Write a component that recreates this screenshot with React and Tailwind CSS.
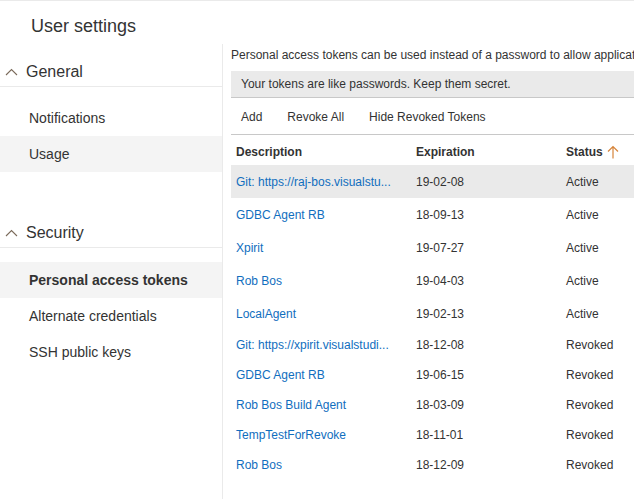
import React from "react";

const tokens = [
    { name: "Git: https://raj-bos.visualstu...", exp: "19-02-08", status: "Active", selected: true },
    { name: "GDBC Agent RB", exp: "18-09-13", status: "Active" },
    { name: "Xpirit", exp: "19-07-27", status: "Active" },
    { name: "Rob Bos", exp: "19-04-03", status: "Active" },
    { name: "LocalAgent", exp: "19-02-13", status: "Active" },
    { name: "Git: https://xpirit.visualstudi...", exp: "18-12-08", status: "Revoked" },
    { name: "GDBC Agent RB", exp: "19-06-15", status: "Revoked" },
    { name: "Rob Bos Build Agent", exp: "18-03-09", status: "Revoked" },
    { name: "TempTestForRevoke", exp: "18-11-01", status: "Revoked" },
    { name: "Rob Bos", exp: "18-12-09", status: "Revoked" },
];

const Chevron = () => (
    <svg width="13" height="8" viewBox="0 0 13 8" className="mr-[8px]">
        <polyline points="1,7 6.5,1.5 12,7" fill="none" stroke="#7a6a5a" strokeWidth="1.1" />
    </svg>
);

const GroupHeader = ({ title }) => (
    <div className="h-[43px] pt-[14px] flex items-center pl-[5px] border-b border-[#eaeaea] text-[16px] text-[#333]">
        <Chevron />
        <span>{title}</span>
    </div>
);

const NavItem = ({ label, active, hovered }) => (
    <div
        className={
            "h-[36px] flex items-center pl-[29px] text-[14px] text-[#333] " +
            (active ? "bg-[#f4f4f4] font-semibold " : "") +
            (hovered ? "bg-[#f4f4f4]" : "")
        }
    >
        {label}
    </div>
);

const App = () => {
    return (
        <div className="w-[634px] h-[499px] overflow-hidden bg-white border-t border-[#eaeaea] font-['Liberation_Sans','Noto_Sans',sans-serif]">
            <div className="h-[43px] pl-[31px] pt-[13px]">
                <h1 className="text-[18px] leading-[24px] text-[#333]">User settings</h1>
            </div>
            <div className="flex h-[455px]">
                <div className="w-[223px] shrink-0 border-r border-[#eaeaea]">
                    <GroupHeader title="General" />
                    <div className="mt-[13px]">
                        <NavItem label="Notifications" />
                        <NavItem label="Usage" hovered />
                    </div>
                    <div className="mt-[33px]">
                        <GroupHeader title="Security" />
                    </div>
                    <div className="mt-[14px]">
                        <NavItem label="Personal access tokens" active />
                        <NavItem label="Alternate credentials" />
                        <NavItem label="SSH public keys" />
                    </div>
                </div>

                <div className="flex-1 min-w-0 overflow-hidden pl-[8px]">
                    <div className="pt-[3px] h-[27px] text-[12px] leading-[16px] text-[#333] whitespace-nowrap">
                        Personal access tokens can be used instead of a password to allow applications outside of Visual Studio Team Services to access your account.
                    </div>
                    <div className="h-[27px] bg-[#eaeaea] border-b border-[#c8c8c8] flex items-center pl-[10px] text-[12px] text-[#333] w-[420px]">
                        Your tokens are like passwords. Keep them secret.
                    </div>
                    <div className="h-[37px] pt-[2px] border-b border-[#c8c8c8] flex items-center pl-[10px] gap-[25px] text-[12px] text-[#333] w-[420px]">
                        <span>Add</span>
                        <span>Revoke All</span>
                        <span>Hide Revoked Tokens</span>
                    </div>

                    <div className="w-[420px] text-[12px]">
                        <div className="h-[30px] flex items-end pb-[5px] font-semibold text-[#333] leading-[16px]">
                            <div className="w-[180px] pl-[5px]">Description</div>
                            <div className="w-[150px] pl-[5px]">Expiration</div>
                            <div className="pl-[5px] flex items-center gap-[4px]">
                                Status
                                <svg width="12" height="14" viewBox="0 0 12 14">
                                    <path d="M6 13.5V1.5M1 6.5L6 1.5L11 6.5" fill="none" stroke="#d6843a" strokeWidth="1.2" />
                                </svg>
                            </div>
                        </div>
                        {tokens.map((t, i) => (
                            <div
                                key={i}
                                className={
                                    "flex items-center " +
                                    (t.status === "Active" ? "h-[33px] " : "h-[30px] ") +
                                    (t.selected ? "bg-[#eaeaea]" : "")
                                }
                            >
                                <div className="w-[180px] pl-[5px] whitespace-nowrap overflow-hidden text-[#106ebe]">
                                    {t.name}
                                </div>
                                <div className="w-[150px] pl-[5px] text-[#333]">{t.exp}</div>
                                <div className="pl-[5px] text-[#333]">{t.status}</div>
                            </div>
                        ))}
                    </div>
                </div>
            </div>
        </div>
    );
};

export default App;
